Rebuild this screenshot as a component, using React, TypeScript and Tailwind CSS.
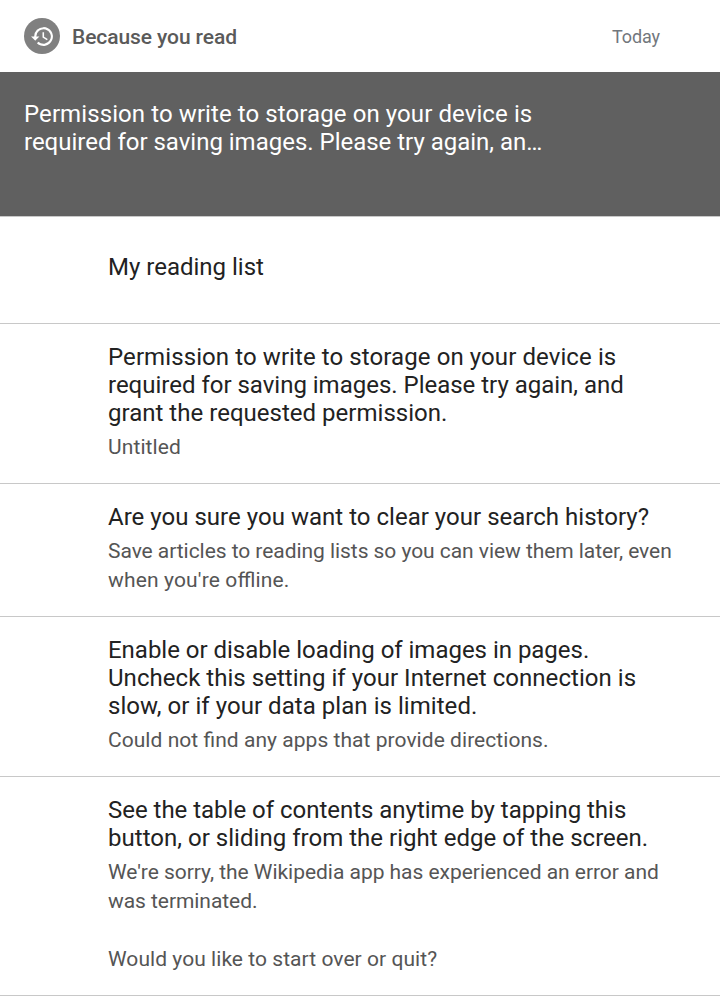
import React from "react";

type Line = { text: string; tracking?: string };
type Item = { title: Line[]; sub: Line[]; box: string };

const items: Item[] = [
  { title: [{ text: "My reading list" }], sub: [], box: "h-[107px] pt-9" },
  {
    title: [
      { text: "Permission to write to storage on your device is", tracking: "tracking-[0.09px]" },
      { text: "required for saving images. Please try again, and", tracking: "tracking-[-0.01px]" },
      { text: "grant the requested permission.", tracking: "tracking-[0.02px]" },
    ],
    sub: [{ text: "Untitled", tracking: "tracking-[0.1px]" }],
    box: "h-[160px] pt-[19px]",
  },
  {
    title: [{ text: "Are you sure you want to clear your search history?", tracking: "tracking-[0.02px]" }],
    sub: [
      { text: "Save articles to reading lists so you can view them later, even", tracking: "tracking-[-0.055px]" },
      { text: "when you're offline.", tracking: "tracking-[0.15px]" },
    ],
    box: "h-[133px] pt-[19px]",
  },
  {
    title: [
      { text: "Enable or disable loading of images in pages.", tracking: "tracking-[-0.02px]" },
      { text: "Uncheck this setting if your Internet connection is", tracking: "tracking-[0.04px]" },
      { text: "slow, or if your data plan is limited.", tracking: "tracking-[0.05px]" },
    ],
    sub: [{ text: "Could not find any apps that provide directions.", tracking: "tracking-[0.045px]" }],
    box: "h-[160px] pt-[19px]",
  },
  {
    title: [
      { text: "See the table of contents anytime by tapping this", tracking: "tracking-[-0.02px]" },
      { text: "button, or sliding from the right edge of the screen.", tracking: "tracking-[0.025px]" },
    ],
    sub: [
      { text: "We're sorry, the Wikipedia app has experienced an error and", tracking: "tracking-[-0.035px]" },
      { text: "was terminated.", tracking: "tracking-[-0.06px]" },
      { text: "\u00a0" },
      { text: "Would you like to start over or quit?", tracking: "tracking-[0.05px]" },
    ],
    box: "h-[219px] pt-[19px]",
  },
];

const heroLines: Line[] = [
  { text: "Permission to write to storage on your device is", tracking: "tracking-[0.09px]" },
  { text: "required for saving images. Please try again, an…", tracking: "tracking-[-0.01px]" },
];

function Lines({ lines }: { lines: Line[] }) {
  return (
    <>
      {lines.map((line, i) => (
        <span key={i} className={`block whitespace-nowrap ${line.tracking ?? ""}`}>{line.text}</span>
      ))}
    </>
  );
}

export default function App() {
  return (
    <div className="h-[996px] w-[720px] overflow-hidden bg-white font-['Roboto',sans-serif] [font-feature-settings:'liga'_1]">
      <header className="flex h-[72px] items-center pl-6 pr-[60px]">
        <div className="flex size-9 items-center justify-center rounded-full bg-[#808080]">
          <svg viewBox="0 0 24 24" className="size-[25px] fill-white">
            <path d="M13 3a9 9 0 0 0-9 9H1l3.89 3.89.07.14L9 12H6a7 7 0 1 1 2.06 4.94l-1.42 1.42A9 9 0 1 0 13 3zm-1 5v5l4.28 2.54.72-1.21-3.5-2.08V8H12z" />
          </svg>
        </div>
        <h1 className="ml-3 pt-0.5 text-[21px] font-medium leading-7 tracking-[-0.09px] text-[#5a5a5a]">Because you read</h1>
        <span className="ml-auto pt-0.5 text-[18px] leading-6 tracking-[-0.1px] text-[#72777d]">Today</span>
      </header>
      <section className="h-[145px] border-b border-[#c8c8c8] bg-[#606060] px-6 pt-7 text-[24px] leading-7 text-white">
        <Lines lines={heroLines} />
      </section>
      <main>
        {items.map((item, i) => (
          <article key={i} className={`border-b border-[#c8c8c8] pl-[108px] ${item.box}`}>
            <h2 className="text-[24px] leading-7 text-[#222222]"><Lines lines={item.title} /></h2>
            {item.sub.length > 0 && (
              <p className="mt-1.5 text-[21px] leading-[29px] text-[#555555]"><Lines lines={item.sub} /></p>
            )}
          </article>
        ))}
      </main>
    </div>
  );
}
